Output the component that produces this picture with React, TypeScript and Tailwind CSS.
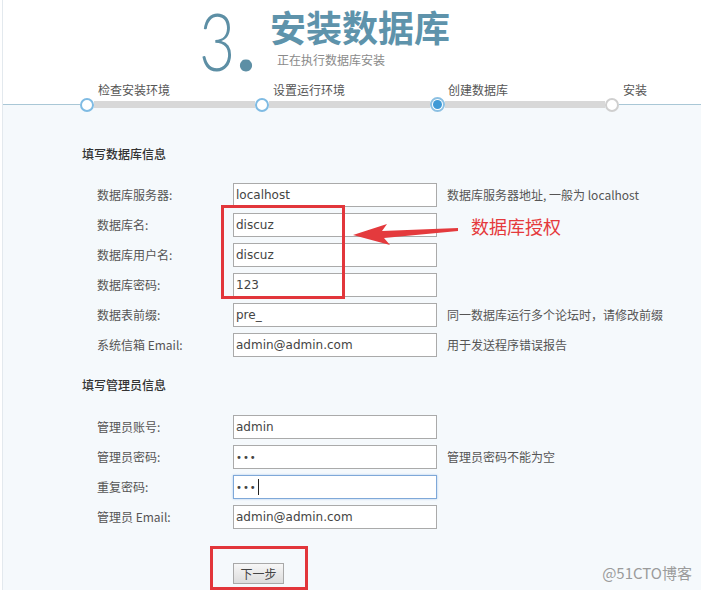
import React from "react";

const cjk = "font-['Noto_Sans_CJK_SC',sans-serif]";
const mono = "font-['DejaVu_Sans','Noto_Sans_CJK_SC',sans-serif]";

const steps = ["检查安装环境", "设置运行环境", "创建数据库", "安装"];

const dbRows = [
    { label: "数据库服务器:", value: "localhost", hint: "数据库服务器地址, 一般为 localhost" },
    { label: "数据库名:", value: "discuz" },
    { label: "数据库用户名:", value: "discuz" },
    { label: "数据库密码:", value: "123" },
    { label: "数据表前缀:", value: "pre_", hint: "同一数据库运行多个论坛时，请修改前缀" },
    { label: "系统信箱 Email:", value: "admin@admin.com", hint: "用于发送程序错误报告" },
];

const adminRows = [
    { label: "管理员账号:", value: "admin" },
    { label: "管理员密码:", value: "•••", hint: "管理员密码不能为空" },
    { label: "重复密码:", value: "•••", focused: true },
    { label: "管理员 Email:", value: "admin@admin.com" },
];

type Row = { label: string; value: string; hint?: string; focused?: boolean };

function FormRow({ row }: { row: Row }) {
    return (
        <div className="flex items-center h-[24px]">
            <div className="w-[151px] shrink-0 pl-[15px] text-[12px] text-[#555]">{row.label}</div>
            <div
                className={`w-[204px] h-[24px] shrink-0 bg-white border flex items-center pl-[2px] text-[12px] text-[#444] ${mono} ${
                    row.focused ? "border-[#7fa8d8] shadow-[0_0_2px_#a9c8ec]" : "border-[#aaaaaa]"
                }`}
            >
                <span className={row.value.startsWith("•") ? "text-[10px] tracking-[1px]" : ""}>{row.value}</span>
                {row.focused && <span className="w-px h-[16px] bg-[#222] ml-[1px]" />}
            </div>
            {row.hint && <div className="ml-[10px] text-[12px] text-[#555] whitespace-nowrap">{row.hint}</div>}
        </div>
    );
}

function Circle({ kind }: { kind: "done" | "current" | "todo" }) {
    if (kind === "current") {
        return (
            <div className="w-[15px] h-[15px] rounded-full border-2 border-[#8cc0e2] bg-white flex items-center justify-center shrink-0">
                <div className="w-[9px] h-[9px] rounded-full bg-[#3f9ad6]" />
            </div>
        );
    }
    return (
        <div
            className={`w-[14px] h-[14px] rounded-full border-2 bg-white shrink-0 ${
                kind === "done" ? "border-[#7fbbe3]" : "border-[#cfcfcf]"
            }`}
        />
    );
}

export default function App() {
    return (
        <div className={`relative w-[701px] h-[590px] overflow-hidden bg-white pl-[2px] ${cjk}`}>
            <div className="w-[699px] h-full border-l border-[#e3e9ee] flex flex-col">
                {/* Header */}
                <div className="h-[97px] bg-white flex flex-col">
                    <div className="h-[83px] flex pl-[196px]">
                        <div className="w-[71px] shrink-0 -mt-[8px] flex items-start font-['Lato',sans-serif] text-[80px] leading-[96px] text-[#5d8fa5]">
                            <span className="inline-block origin-left scale-x-[0.78] font-light">3</span>
                            <span className="-ml-[9px] font-bold">.</span>
                        </div>
                        <div className="pt-[8px]">
                            <div className="text-[36px] leading-[36px] font-bold text-[#5e93ab]">安装数据库</div>
                            <div className="mt-[9px] ml-[7px] text-[12px] leading-[14px] text-[#8a8a8a]">正在执行数据库安装</div>
                        </div>
                    </div>
                    <div className="flex pl-[95px] h-[14px] text-[12px] leading-[14px] text-[#555]">
                        {steps.map((s) => (
                            <div key={s} className="w-[175px] shrink-0">
                                {s}
                            </div>
                        ))}
                    </div>
                </div>

                {/* Steps progress */}
                <div className="h-[15px] flex items-center bg-[linear-gradient(to_bottom,white_50%,#f5f9fc_50%)]">
                    <div className="w-[77px] h-px bg-[#a9c7d6]" />
                    <Circle kind="done" />
                    <div className="w-[161px] h-[7px] bg-[#d8d8d8]" />
                    <Circle kind="done" />
                    <div className="w-[161px] h-[7px] bg-[#d8d8d8]" />
                    <Circle kind="current" />
                    <div className="w-[160px] h-[7px] bg-[#d8d8d8]" />
                    <Circle kind="todo" />
                    <div className="flex-1 h-px bg-[#a9c7d6]" />
                </div>

                {/* Body */}
                <div className="flex-1 bg-[#f5f9fc] pl-[79px] pt-[34px]">
                    <div className="text-[12px] leading-[16px] text-[#333] font-medium">填写数据库信息</div>
                    <div className="mt-[21px] flex flex-col gap-[6px]">
                        {dbRows.map((r) => (
                            <FormRow key={r.label} row={r} />
                        ))}
                    </div>

                    <div className="mt-[20px] text-[12px] leading-[16px] text-[#333] font-medium">填写管理员信息</div>
                    <div className="mt-[22px] flex flex-col gap-[6px]">
                        {adminRows.map((r) => (
                            <FormRow key={r.label} row={r} />
                        ))}
                    </div>

                    <div className="mt-[31px] ml-[151px]">
                        <button className="w-[51px] h-[21px] border border-[#a8a8a8] bg-gradient-to-b from-[#f7f7f7] to-[#dcdcdc] text-[12px] leading-[19px] text-[#444]">
                            下一步
                        </button>
                    </div>
                </div>
            </div>

            {/* Annotations */}
            <div className="absolute left-[221px] top-[205px] w-[124px] h-[94px] border-[3px] border-[#e2363b]" />
            <div className="absolute left-[210px] top-[546px] w-[98px] h-[44px] border-[3px] border-[#e2363b]" />
            <svg className="absolute left-[350px] top-[220px]" width="115" height="28" viewBox="0 0 115 28">
                <polygon points="3,15 37,4 32,11 108,8 108,11 34,18 40,25" fill="#e43a3d" />
            </svg>
            <div className="absolute left-[471px] top-[214px] text-[18px] leading-[24px] text-[#e5393c]">数据库授权</div>
            <div className="absolute right-[9px] top-[563px] text-[15px] leading-[20px] text-[#9b9b9b]">@51CTO博客</div>
        </div>
    );
}
